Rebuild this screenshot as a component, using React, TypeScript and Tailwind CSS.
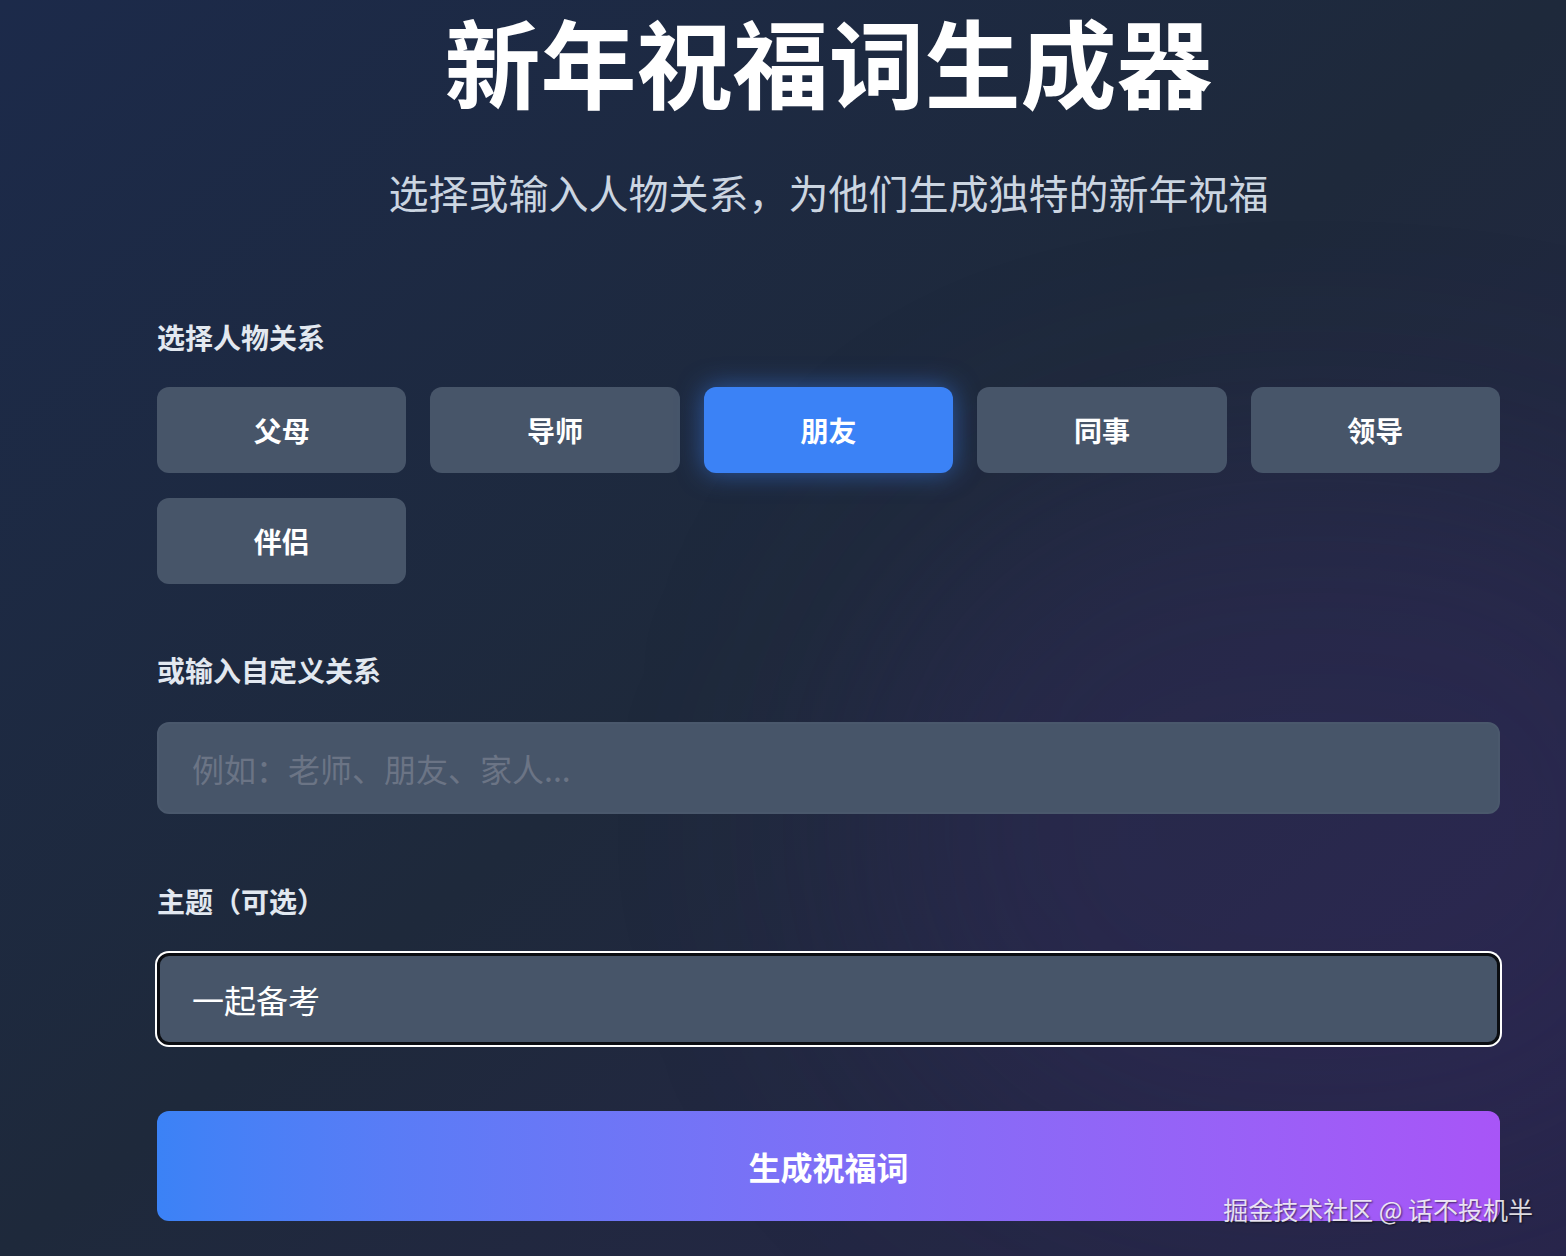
import { useState } from "react";

const relations = ["父母", "导师", "朋友", "同事", "领导", "伴侣"];

export default function App() {
  const [selected, setSelected] = useState("朋友");
  const [custom, setCustom] = useState("");
  const [theme, setTheme] = useState("一起备考");

  return (
    <div
      className="relative min-h-screen h-[1256px] overflow-hidden bg-gradient-to-br from-[#1c2a4a] via-[#1e293b] to-[#27254a] text-white"
      style={{ fontFamily: '"Noto Sans CJK SC", "Noto Sans", sans-serif' }}
    >
      {/* soft purple glow bottom right */}
      <div className="pointer-events-none absolute right-[-200px] bottom-[80px] h-[700px] w-[900px] rounded-full bg-[#3a2a6a]/25 blur-[120px]" />

      <div className="relative ml-[157px] w-[1343px]">
        <h1 className="text-center text-[96px] font-bold leading-[120px]">
          新年祝福词生成器
        </h1>
        <p className="mt-[52px] text-center text-[40px] leading-none text-[#cbd5e1]">
          选择或输入人物关系，为他们生成独特的新年祝福
        </p>

        {/* ---------------- RELATIONS ---------------- */}
        <div className="mt-[111px] text-[28px] font-bold leading-none text-[#e2e8f0]">
          选择人物关系
        </div>
        <div className="mt-[36px] grid grid-cols-5 gap-x-[24px] gap-y-[25px]">
          {relations.map((r) => (
            <button
              key={r}
              onClick={() => setSelected(r)}
              className={
                selected === r
                  ? "h-[86px] rounded-xl bg-[#3b82f6] text-[28px] font-semibold text-white shadow-[0_0_26px_rgba(59,130,246,0.55)]"
                  : "h-[86px] rounded-xl bg-[#475569] text-[28px] font-semibold text-white"
              }
            >
              {r}
            </button>
          ))}
        </div>

        {/* ---------------- CUSTOM ---------------- */}
        <div className="mt-[72px] text-[28px] font-bold leading-none text-[#e2e8f0]">
          或输入自定义关系
        </div>
        <input
          value={custom}
          onChange={(e) => setCustom(e.target.value)}
          placeholder="例如：老师、朋友、家人..."
          className="mt-[38px] block h-[92px] w-full rounded-xl border-2 border-[#4a586c] bg-[#475569] px-[33px] text-[32px] text-white outline-none placeholder:text-[#6b7485]"
        />

        {/* ---------------- THEME ---------------- */}
        <div className="mt-[73px] text-[28px] font-bold leading-none text-[#e2e8f0]">
          主题（可选）
        </div>
        <input
          value={theme}
          onChange={(e) => setTheme(e.target.value)}
          className="mt-[38px] block h-[92px] w-full rounded-xl border-[3px] border-[#0b0d12] bg-[#475569] px-[32px] text-[32px] text-white outline-none ring-2 ring-white"
        />

        <button className="mt-[66px] block h-[110px] w-full rounded-xl bg-gradient-to-r from-[#3b82f6] to-[#a855f7] text-[32px] font-bold text-white">
          生成祝福词
        </button>
      </div>

      <div
        className="absolute right-[33px] bottom-[34px] text-[25px] leading-none text-white/85"
        style={{ textShadow: "1px 1px 2px rgba(0,0,0,0.6)" }}
      >
        掘金技术社区 @ 话不投机半
      </div>
    </div>
  );
}
